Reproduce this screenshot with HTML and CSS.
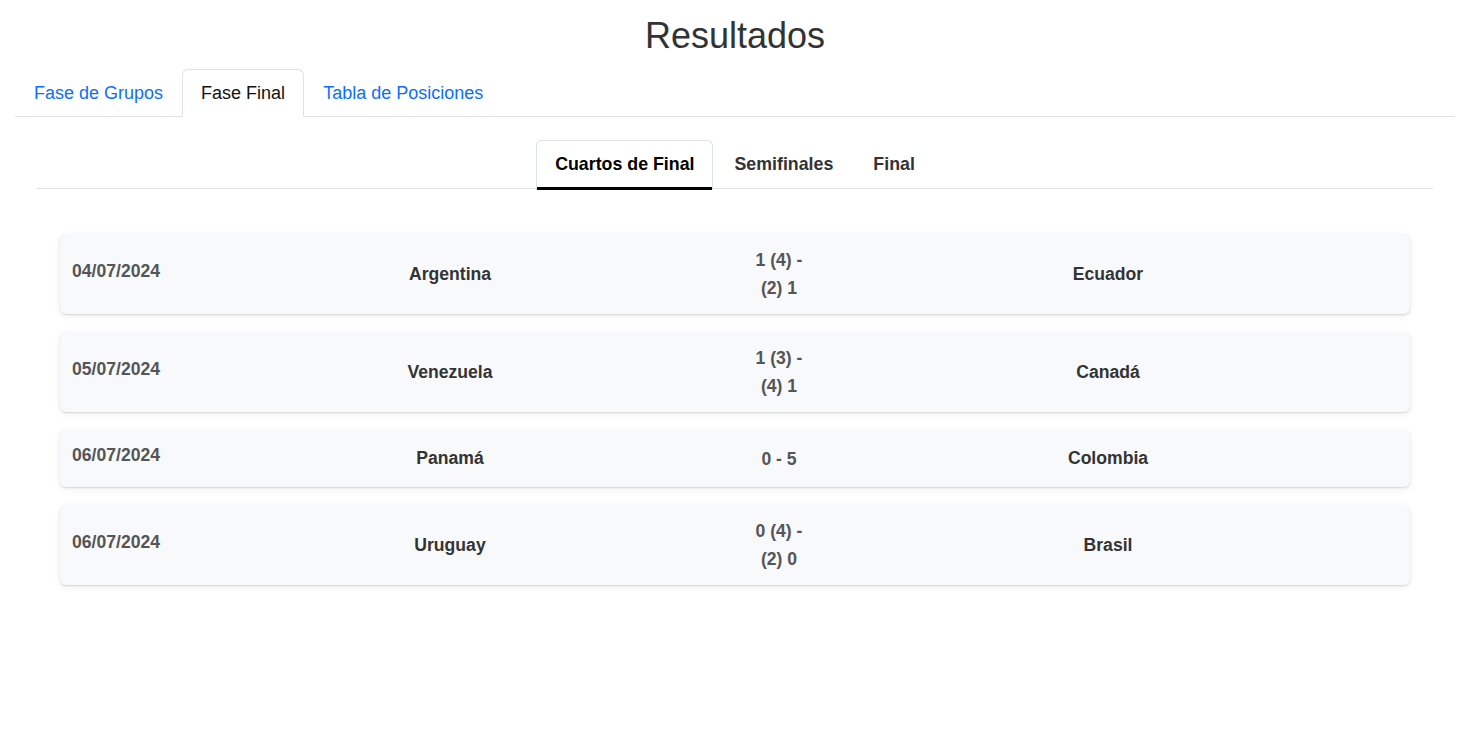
FILE: index.html
```html
<!DOCTYPE html>
<html lang="es">
<head>
<meta charset="utf-8">
<title>Resultados</title>
<link rel="stylesheet" href="styles.css">
</head>
<body>
<div class="page">
  <h1 class="title">Resultados</h1>
  <nav class="tabs">
    <a class="tab">Fase de Grupos</a>
    <a class="tab active">Fase Final</a>
    <a class="tab">Tabla de Posiciones</a>
  </nav>
  <section class="panel">
    <nav class="subtabs">
      <a class="subtab active">Cuartos de Final</a>
      <a class="subtab">Semifinales</a>
      <a class="subtab">Final</a>
    </nav>
    <div class="matches">
      <div class="match">
        <div class="date">04/07/2024</div>
        <div class="team">Argentina</div>
        <div class="score">1 (4) - (2) 1</div>
        <div class="team">Ecuador</div>
      </div>
      <div class="match">
        <div class="date">05/07/2024</div>
        <div class="team">Venezuela</div>
        <div class="score">1 (3) - (4) 1</div>
        <div class="team">Canadá</div>
      </div>
      <div class="match">
        <div class="date">06/07/2024</div>
        <div class="team">Panamá</div>
        <div class="score">0 - 5</div>
        <div class="team">Colombia</div>
      </div>
      <div class="match">
        <div class="date">06/07/2024</div>
        <div class="team">Uruguay</div>
        <div class="score">0 (4) - (2) 0</div>
        <div class="team">Brasil</div>
      </div>
    </div>
  </section>
</div>
</body>
</html>
```

FILE: styles.css
```css
* { box-sizing: border-box; }

body {
  margin: 0;
  background: #fff;
  font-family: "Liberation Sans", Arial, sans-serif;
  color: #212529;
}

.page {
  padding: 14px 15px 0;
}

.title {
  margin: 0 0 12px;
  text-align: center;
  font-size: 36px;
  font-weight: 400;
  line-height: 1.2;
  color: #333;
}

.tabs {
  display: flex;
  border-bottom: 1px solid #dee2e6;
}

.tab {
  display: block;
  padding: 9.5px 18px;
  font-size: 18px;
  line-height: 1.5;
  color: #0d6efd;
  border: 1px solid transparent;
  border-top-left-radius: 6px;
  border-top-right-radius: 6px;
  margin-bottom: -1px;
  cursor: pointer;
}

.tab.active {
  color: #111;
  background: #fff;
  border-color: #dee2e6 #dee2e6 #fff;
}

.panel {
  padding: 23px 22px 0;
}

.subtabs {
  display: flex;
  justify-content: center;
  gap: 2px;
  border-bottom: 1px solid #dee2e6;
}

.subtab {
  display: block;
  padding: 10px 18px;
  font-size: 17.8px;
  font-weight: 700;
  line-height: 1.5;
  color: #333;
  border: 1px solid transparent;
  border-bottom: 0;
  border-top-left-radius: 6px;
  border-top-right-radius: 6px;
  cursor: pointer;
}

.subtab.active {
  color: #000;
  border-color: #dee2e6;
  box-shadow: inset 0 -3px 0 #000;
  margin-bottom: -2px;
  padding-bottom: 12px;
}

.matches {
  display: flex;
  flex-direction: column;
  gap: 18px;
  padding: 45px 23px 20px;
}

.match {
  display: grid;
  grid-template-columns: 88px 1fr 78px 1fr;
  align-items: center;
  padding: 12px;
  background: #f8f9fa;
  border-radius: 6px;
  box-shadow: 0 1px 2px rgba(0, 0, 0, 0.14), 0 2px 8px rgba(0, 0, 0, 0.06);
  font-size: 17.6px;
  font-weight: 700;
}

.date {
  color: #555;
  line-height: 1.5;
  margin-bottom: 6px;
  white-space: nowrap;
}

.team {
  text-align: center;
  color: #333;
  line-height: 1.5;
}

.score {
  padding: 0 10px;
  text-align: center;
  color: #555;
  line-height: 1.6;
}
```
